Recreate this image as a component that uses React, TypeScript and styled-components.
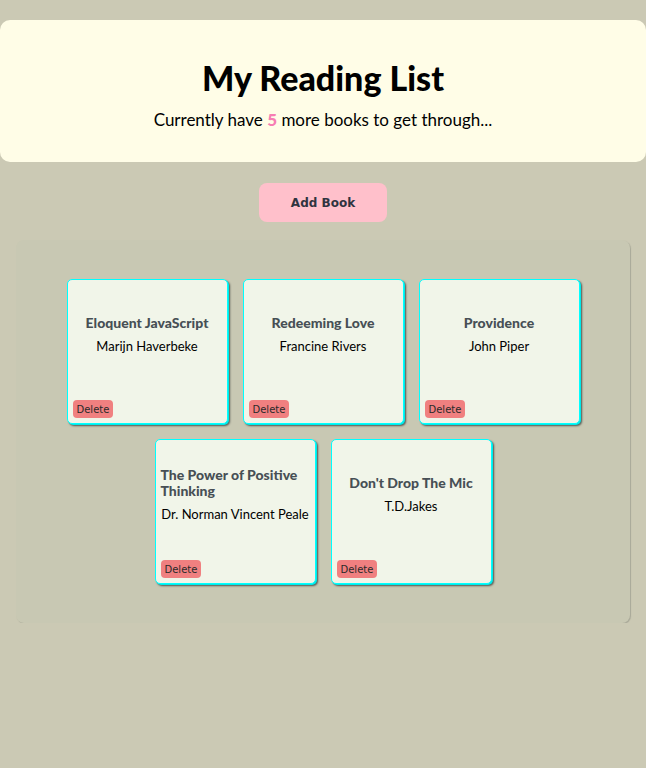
import React from 'react';
import styled, { createGlobalStyle } from 'styled-components';

const GlobalStyle = createGlobalStyle`
  body {
    margin: 0;
    background-color: #cbc9b4;
    font-family: Lato, "Open Sans", sans-serif;
  }
`;

const Page = styled.div`
  padding-top: 20px;
  display: flex;
  flex-direction: column;
  align-items: center;
`;

const Header = styled.header`
  align-self: stretch;
  height: 142px;
  box-sizing: border-box;
  background-color: #fffde7;
  border-radius: 10px;
  display: flex;
  flex-direction: column;
  align-items: center;
  justify-content: center;
  padding-top: 6px;
`;

const Title = styled.h1`
  margin: 0;
  font-size: 34px;
  font-weight: 900;
  color: #000;
  line-height: 40px;
`;

const Subtitle = styled.p`
  margin: 11px 0 0;
  font-size: 17px;
  color: #000;
`;

const Count = styled.span`
  color: #f77eb3;
  font-weight: 900;
`;

const AddButton = styled.button`
  margin-top: 21px;
  width: 128px;
  height: 39px;
  border: none;
  border-radius: 8px;
  background-color: #ffc0cb;
  color: #2f3440;
  font-family: "DejaVu Sans", Verdana, sans-serif;
  font-weight: 700;
  font-size: 12px;
  cursor: pointer;
`;

const Shelf = styled.section`
  align-self: stretch;
  margin: 18px 16px 0;
  padding: 39px 45px;
  background-color: #c8c8b3;
  border-radius: 8px;
  box-shadow: 1px 1px 1px #a8a898;
  display: flex;
  flex-wrap: wrap;
  justify-content: center;
  gap: 15px;
`;

const Card = styled.div`
  width: 161px;
  height: 145px;
  box-sizing: border-box;
  background-color: #f1f5e9;
  border: 1px solid #00ffff;
  border-radius: 5px;
  box-shadow: 1px 1px 0 #00e8e8, 2px 2px 2px #50554f;
  padding: 5px;
  display: flex;
  flex-direction: column;
`;

const CardBody = styled.div`
  flex: 1;
  display: flex;
  flex-direction: column;
  align-items: center;
  justify-content: center;
  padding-bottom: 16px;
`;

const BookTitle = styled.h3`
  margin: 0;
  font-size: 14px;
  line-height: 16px;
  font-weight: 900;
  color: #474f55;
`;

const Author = styled.p`
  margin: 7px 0 0;
  font-size: 13px;
  line-height: 16px;
  color: #000;
`;

const DeleteButton = styled.button`
  align-self: flex-start;
  height: 18px;
  padding: 0 4px;
  border: none;
  border-radius: 4px;
  background-color: #f08080;
  color: #2a2a2a;
  font-family: "DejaVu Sans", Verdana, sans-serif;
  font-size: 10px;
  cursor: pointer;
`;

const books = [
  { title: 'Eloquent JavaScript', author: 'Marijn Haverbeke' },
  { title: 'Redeeming Love', author: 'Francine Rivers' },
  { title: 'Providence', author: 'John Piper' },
  { title: 'The Power of Positive Thinking', author: 'Dr. Norman Vincent Peale' },
  { title: "Don't Drop The Mic", author: 'T.D.Jakes' },
];

export default function App() {
  return (
    <Page>
      <GlobalStyle />
      <Header>
        <Title>My Reading List</Title>
        <Subtitle>
          Currently have <Count>{books.length}</Count> more books to get through...
        </Subtitle>
      </Header>
      <AddButton>Add Book</AddButton>
      <Shelf>
        {books.map(book => (
          <Card key={book.title}>
            <CardBody>
              <BookTitle>{book.title}</BookTitle>
              <Author>{book.author}</Author>
            </CardBody>
            <DeleteButton>Delete</DeleteButton>
          </Card>
        ))}
      </Shelf>
    </Page>
  );
}
